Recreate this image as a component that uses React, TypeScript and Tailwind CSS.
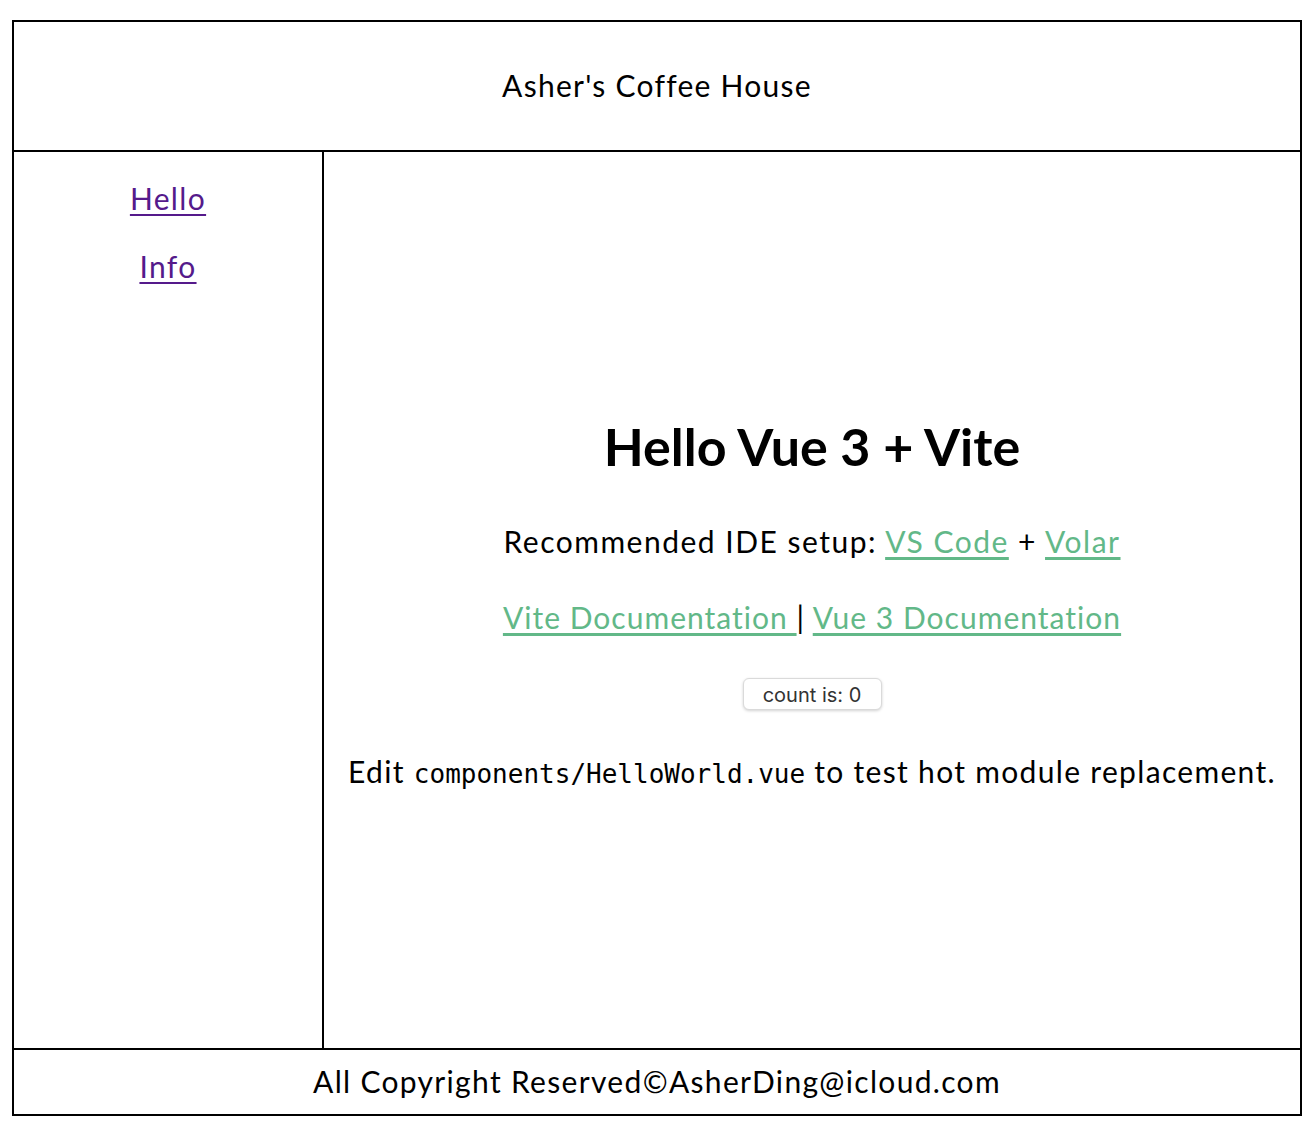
import React from "react";

export default function App() {
  const font = { fontFamily: "Lato, 'Noto Sans', sans-serif" };
  return (
    <div className="w-[1310px] h-[1140px] bg-white pt-[20px] pl-[12px]" style={font}>
      <div className="w-[1290px] h-[1096px] border-2 border-black flex flex-col text-black">
        <header className="h-[130px] border-b-2 border-black flex items-center justify-center shrink-0">
          <span className="text-[30px] leading-[36px] tracking-[0.042em] -mt-[2px]">Asher's Coffee House</span>
        </header>
        <div className="flex h-[898px] border-b-2 border-black shrink-0">
          <nav className="w-[310px] border-r-2 border-black flex flex-col items-center pt-[28px] gap-[32px] shrink-0">
            <a href="#" className="text-[30px] leading-[36px] tracking-[0.045em] text-[#551a8b] underline underline-offset-[4px] decoration-2">Hello</a>
            <a href="#" className="text-[30px] leading-[36px] tracking-[0.045em] text-[#551a8b] underline underline-offset-[4px] decoration-2">Info</a>
          </nav>
          <main className="flex-1 flex flex-col items-center pt-[268px]">
            <h1 className="text-[52px] leading-[52px] font-bold">Hello Vue 3 + Vite</h1>
            <p className="mt-[51px] text-[30px] leading-[36px] tracking-[0.05em]">
              Recommended IDE setup:{" "}
              <a href="#" className="text-[#62b888] underline underline-offset-[4px]">VS Code</a>
              {" "}+{" "}
              <a href="#" className="text-[#62b888] underline underline-offset-[4px]">Volar</a>
            </p>
            <p className="mt-[40px] text-[30px] leading-[36px] tracking-[0.034em]">
              <a href="#" className="text-[#62b888] underline underline-offset-[4px]">Vite Documentation </a>
              |{" "}
              <a href="#" className="text-[#62b888] underline underline-offset-[4px]">Vue 3 Documentation</a>
            </p>
            <button
              className="mt-[43px] w-[139px] h-[32px] rounded-[6px] border border-[#dadada] bg-white shadow-[0_1px_3px_rgba(0,0,0,0.18)] text-[20px] text-[#333] flex items-center justify-center pt-[2px]"
              style={{ fontFamily: "Inter, Roboto, sans-serif" }}
            >
              count is: 0
            </button>
            <p className="mt-[43px] text-[30px] leading-[36px] tracking-[0.044em]">
              Edit{" "}
              <code className="text-[26px] tracking-normal" style={{ fontFamily: "'DejaVu Sans Mono', 'Liberation Mono', monospace" }}>
                components/HelloWorld.vue
              </code>{" "}
              to test hot module replacement.
            </p>
          </main>
        </div>
        <footer className="flex-1 flex items-center justify-center">
          <span className="text-[30px] leading-[36px] tracking-[0.044em] -mt-[2px]">All Copyright Reserved©AsherDing@icloud.com</span>
        </footer>
      </div>
    </div>
  );
}
